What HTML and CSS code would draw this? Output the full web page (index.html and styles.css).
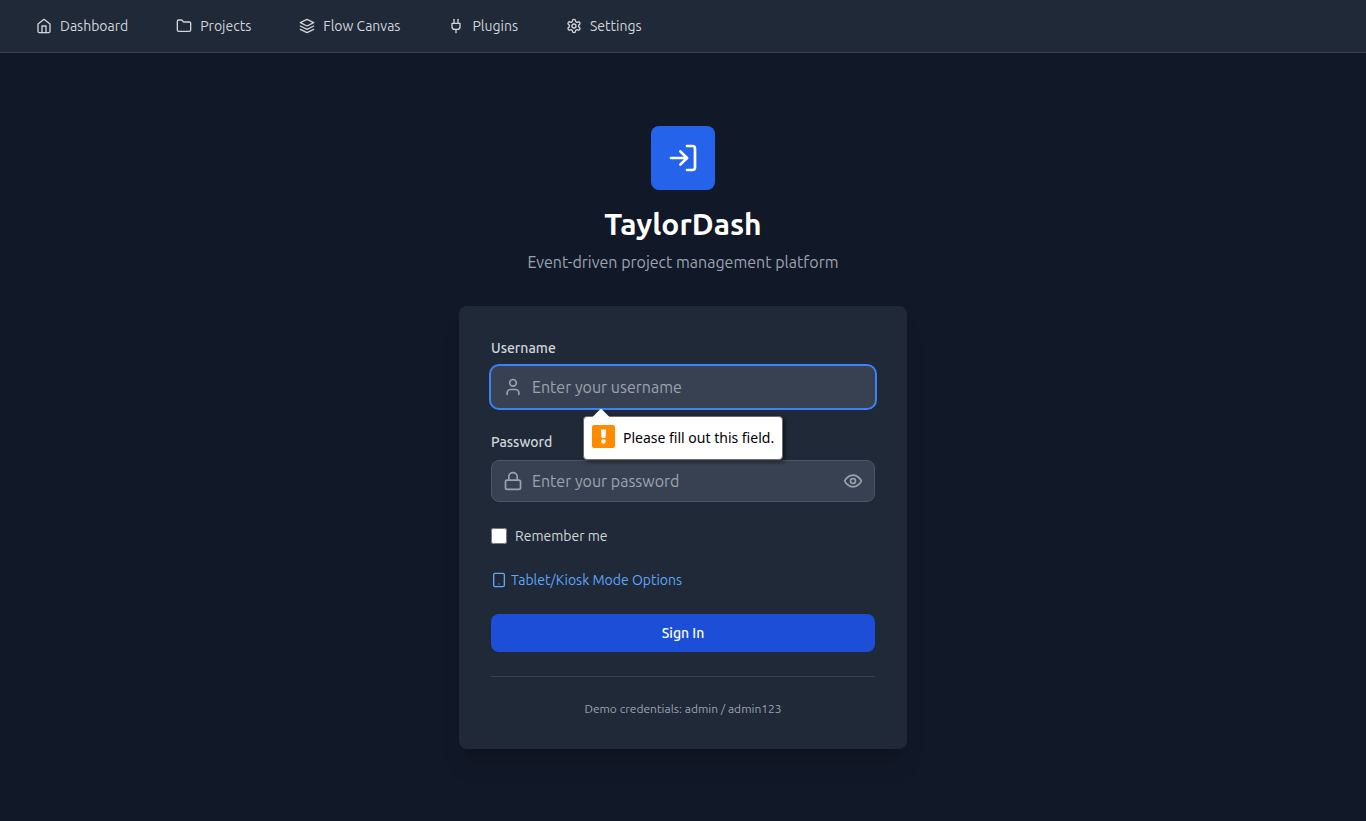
FILE: index.html
```html
<!DOCTYPE html>
<html lang="en">
<head>
<meta charset="utf-8">
<meta name="viewport" content="width=device-width, initial-scale=1">
<title>TaylorDash</title>
<link rel="stylesheet" href="styles.css">
</head>
<body>
<nav class="nav">
  <a class="nav-link" href="#dashboard"><svg class="icon" viewBox="0 0 24 24"><path d="m3 9 9-7 9 7v11a2 2 0 0 1-2 2H5a2 2 0 0 1-2-2z"/><path d="M9 22V12h6v10"/></svg>Dashboard</a>
  <a class="nav-link" href="#projects"><svg class="icon" viewBox="0 0 24 24"><path d="M4 20h16a2 2 0 0 0 2-2V8a2 2 0 0 0-2-2h-7.9a2 2 0 0 1-1.7-.9l-.8-1.2A2 2 0 0 0 7.900 3H4a2 2 0 0 0-2 2v13c0 1.100.9 2 2 2Z"/></svg>Projects</a>
  <a class="nav-link" href="#flow"><svg class="icon" viewBox="0 0 24 24"><path d="m12 2 10 5-10 5L2 7z"/><path d="m2 17 10 5 10-5"/><path d="m2 12 10 5 10-5"/></svg>Flow Canvas</a>
  <a class="nav-link" href="#plugins"><svg class="icon" viewBox="0 0 24 24"><path d="M12 22v-5"/><path d="M9 8V2"/><path d="M15 8V2"/><path d="M18 8v5a4 4 0 0 1-4 4h-4a4 4 0 0 1-4-4V8Z"/></svg>Plugins</a>
  <a class="nav-link" href="#settings"><svg class="icon" viewBox="0 0 24 24"><path d="M12.220 2h-.44a2 2 0 0 0-2 2v.18a2 2 0 0 1-1 1.730l-.43.25a2 2 0 0 1-2 0l-.15-.08a2 2 0 0 0-2.730.73l-.22.38a2 2 0 0 0 .73 2.730l.15.1a2 2 0 0 1 1 1.720v.51a2 2 0 0 1-1 1.740l-.15.09a2 2 0 0 0-.73 2.730l.22.38a2 2 0 0 0 2.730.73l.15-.08a2 2 0 0 1 2 0l.43.25a2 2 0 0 1 1 1.730V20a2 2 0 0 0 2 2h.44a2 2 0 0 0 2-2v-.18a2 2 0 0 1 1-1.730l.43-.25a2 2 0 0 1 2 0l.15.08a2 2 0 0 0 2.730-.73l.22-.39a2 2 0 0 0-.73-2.730l-.15-.08a2 2 0 0 1-1-1.740v-.5a2 2 0 0 1 1-1.740l.15-.09a2 2 0 0 0 .73-2.730l-.22-.38a2 2 0 0 0-2.730-.73l-.15.08a2 2 0 0 1-2 0l-.43-.25a2 2 0 0 1-1-1.730V4a2 2 0 0 0-2-2z"/><circle cx="12" cy="12" r="3"/></svg>Settings</a>
</nav>
<main class="page">
  <div class="login">
    <header class="brand">
      <div class="brand-mark"><svg class="icon icon-xl" viewBox="0 0 24 24"><path d="M15 3h4a2 2 0 0 1 2 2v14a2 2 0 0 1-2 2h-4"/><path d="m10 17 5-5-5-5"/><path d="M15 12H3"/></svg></div>
      <h1 class="brand-name">TaylorDash</h1>
      <p class="brand-tagline">Event-driven project management platform</p>
    </header>
    <form class="card" novalidate>
      <div class="field">
        <label class="label" for="username">Username</label>
        <div class="control">
          <svg class="icon icon-lg control-icon" viewBox="0 0 24 24"><path d="M19 21v-2a4 4 0 0 0-4-4H9a4 4 0 0 0-4 4v2"/><circle cx="12" cy="7" r="4"/></svg>
          <input class="input input-active" id="username" type="text" placeholder="Enter your username" required>
          <div class="tooltip" role="alert"><span class="tooltip-icon"><svg class="alert-glyph" viewBox="0 0 23 23"><path d="M9 4.500h5l-.5 8.500h-4z"/><circle cx="11.500" cy="16.500" r="2.200"/></svg></span>Please fill out this field.</div>
        </div>
      </div>
      <div class="field">
        <label class="label" for="password">Password</label>
        <div class="control">
          <svg class="icon icon-lg control-icon" viewBox="0 0 24 24"><rect x="3" y="11" width="18" height="11" rx="2"/><path d="M7 11V7a5 5 0 0 1 10 0v4"/></svg>
          <input class="input" id="password" type="password" placeholder="Enter your password" required>
          <button class="reveal" type="button" aria-label="Show password"><svg class="icon icon-lg" viewBox="0 0 24 24"><path d="M2 12s3-7 10-7 10 7 10 7-3 7-10 7-10-7-10-7Z"/><circle cx="12" cy="12" r="3"/></svg></button>
        </div>
      </div>
      <div class="remember">
        <input class="checkbox" id="remember" type="checkbox">
        <label for="remember">Remember me</label>
      </div>
      <button class="kiosk" type="button"><svg class="icon" viewBox="0 0 24 24"><rect x="4" y="2" width="16" height="20" rx="2"/><path d="M12 18h.01"/></svg>Tablet/Kiosk Mode Options</button>
      <button class="submit" type="submit">Sign In</button>
      <p class="hint">Demo credentials: admin / admin123</p>
    </form>
  </div>
</main>
</body>
</html>
```
FILE: styles.css
```css
* {
  box-sizing: border-box;
}

body {
  display: flex;
  flex-direction: column;
  min-height: 100vh;
  margin: 0;
  background: #111827;
  color: #d1d5db;
  font-family: Ubuntu, "Open Sans", "Noto Sans", sans-serif;
  font-size: 14px;
  line-height: 20px;
}

h1,
p {
  margin: 0;
}

button,
input {
  font: inherit;
}

button {
  padding: 0;
  border: 0;
  background: none;
  cursor: pointer;
}

.icon {
  display: block;
  flex: none;
  width: 16px;
  height: 16px;
  fill: none;
  stroke: currentColor;
  stroke-width: 2;
  stroke-linecap: round;
  stroke-linejoin: round;
}

.icon-lg {
  width: 20px;
  height: 20px;
}

.icon-xl {
  width: 32px;
  height: 32px;
}

.nav {
  display: flex;
  gap: 16px;
  padding: 8px 20px;
  border-bottom: 1px solid #374151;
  background: #1f2937;
}

.nav-link {
  display: flex;
  align-items: center;
  gap: 8px;
  padding: 8px 16px;
  color: #d1d5db;
  text-decoration: none;
}

.page {
  display: flex;
  flex: 1;
  align-items: center;
  justify-content: center;
  padding: 16px;
}

.login {
  width: 100%;
  max-width: 448px;
}

.brand {
  display: flex;
  flex-direction: column;
  align-items: center;
  margin-bottom: 32px;
  text-align: center;
}

.brand-mark {
  display: grid;
  place-items: center;
  width: 64px;
  height: 64px;
  margin-bottom: 16px;
  border-radius: 8px;
  background: #2563eb;
  color: #fff;
}

.brand-name {
  margin-bottom: 8px;
  color: #fff;
  font-size: 30px;
  font-weight: 700;
  line-height: 36px;
}

.brand-tagline {
  color: #9ca3af;
  font-size: 16px;
  line-height: 24px;
}

.card {
  display: flex;
  flex-direction: column;
  gap: 24px;
  padding: 32px;
  border-radius: 8px;
  background: #1f2937;
  box-shadow: 0 20px 25px -5px rgb(0 0 0 / 10%), 0 8px 10px -6px rgb(0 0 0 / 10%);
}

.field {
  display: flex;
  flex-direction: column;
  gap: 8px;
}

.label {
  font-weight: 500;
}

.control {
  position: relative;
}

.control-icon {
  position: absolute;
  top: 11px;
  left: 12px;
  color: #9ca3af;
}

.input {
  display: block;
  width: 100%;
  height: 42px;
  padding: 8px 40px;
  border: 1px solid #4b5563;
  border-radius: 8px;
  outline: 0;
  background: #374151;
  color: #fff;
  font-size: 16px;
  line-height: 24px;
}

.input::placeholder {
  color: #9ca3af;
}

.input-active {
  border-color: transparent;
  box-shadow: 0 0 0 2px #3b82f6;
}

.reveal {
  position: absolute;
  top: 11px;
  right: 12px;
  color: #9ca3af;
}

.tooltip {
  position: absolute;
  top: 50px;
  left: 92px;
  z-index: 1;
  display: flex;
  align-items: flex-start;
  gap: 8px;
  padding: 8px;
  border: 1px solid #6b6b6b;
  border-radius: 4px;
  background: #fff;
  box-shadow: 2px 2px 4px rgb(0 0 0 / 50%);
  color: #000;
  font-family: "Noto Sans", sans-serif;
  line-height: 26px;
  white-space: nowrap;
}

.tooltip::before {
  position: absolute;
  top: -8px;
  left: 8px;
  width: 18px;
  height: 9px;
  background: #fff;
  clip-path: polygon(50% 0, 100% 100%, 0 100%);
  content: "";
}

.tooltip-icon {
  width: 23px;
  height: 23px;
  border-radius: 2px;
  background: #ff8c00;
}

.alert-glyph {
  display: block;
  fill: #fff;
}

.remember {
  display: flex;
  align-items: center;
  gap: 8px;
}

.checkbox {
  width: 16px;
  height: 16px;
  margin: 0;
}

.kiosk {
  display: flex;
  align-items: center;
  align-self: flex-start;
  gap: 4px;
  color: #60a5fa;
}

.submit {
  height: 38px;
  border-radius: 8px;
  background: #1d4ed8;
  color: #fff;
  font-weight: 500;
}

.hint {
  padding-top: 24px;
  border-top: 1px solid #374151;
  color: #9ca3af;
  font-size: 12px;
  line-height: 16px;
  text-align: center;
}
```
